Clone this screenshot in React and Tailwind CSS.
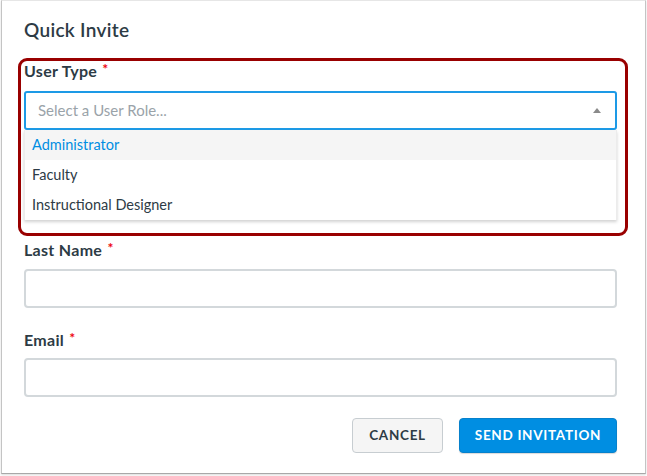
export default function App() {
  const font = { fontFamily: 'Lato, "Open Sans", sans-serif' };
  const Star = () => (
    <span className="text-[#ee0612] text-[14px] font-bold align-top relative top-[-2px] ml-[1px]">*</span>
  );
  return (
    <div className="w-[647px] h-[476px] bg-white overflow-hidden" style={font}>
      <div className="ml-[1px] w-[645px] h-[474px] bg-white border-x border-b border-t border-t-[#e6e6e6] border-x-[#c4c4c4] border-b-[#a8a8a8] shadow-[0_1px_2px_rgba(0,0,0,0.15)] pl-[22px] pr-[28px] pt-[17px]">
        <div className="text-[19px] leading-[24px] font-semibold tracking-[0.3px] text-[#2d3b45]">Quick Invite</div>

        <div className="mt-[16px] -ml-[6px] -mr-[11px] border-[3px] border-[#990000] rounded-[9px] pl-[3px] pr-[8px] pb-[13px]">
          <div className="text-[16px] leading-[20px] font-bold tracking-[0.3px] text-[#2d3b45]">
            User Type <Star />
          </div>
          <div className="mt-[10px] h-[39px] border-2 border-[#1d9ae6] rounded-[3px] flex items-center pl-3 pr-[14px]">
            <span className="flex-1 text-[15px] text-[#9aa3a9]">Select a User Role...</span>
            <svg width="8" height="5" viewBox="0 0 8 5" className="block">
              <path d="M4 0 L8 5 L0 5 Z" fill="#8a8a8a" />
            </svg>
          </div>
          <div className="bg-white shadow-[0_2px_3px_rgba(0,0,0,0.18)] border-x border-x-[#ececec]">
            <div className="h-[30px] flex items-center pl-[7px] bg-[#f5f5f5] text-[14.5px] text-[#008ee2]">Administrator</div>
            <div className="h-[30px] flex items-center pl-[7px] text-[14.5px] text-[#2d3b45]">Faculty</div>
            <div className="h-[30px] flex items-center pl-[7px] text-[14.5px] text-[#2d3b45]">Instructional Designer</div>
          </div>
        </div>

        <div className="mt-[4px] text-[16px] leading-[20px] font-bold tracking-[0.3px] text-[#2d3b45]">
          Last Name <Star />
        </div>
        <div className="mt-[9px] h-[39px] border-2 border-[#d3d8db] rounded-[4px] bg-white"></div>

        <div className="mt-[22px] text-[16px] leading-[20px] font-bold tracking-[0.3px] text-[#2d3b45]">
          Email <Star />
        </div>
        <div className="mt-[8px] h-[39px] border-2 border-[#d3d8db] rounded-[4px] bg-white"></div>

        <div className="mt-[21px] flex justify-end gap-[16px]">
          <button className="w-[91px] h-[35px] rounded-[4px] bg-[#f5f5f5] border border-[#c7cdd1] text-[13.5px] font-bold tracking-[0.7px] text-[#2d3b45]">CANCEL</button>
          <button className="w-[158px] h-[35px] rounded-[4px] bg-[#008ee2] border border-[#0681cc] text-[13.5px] font-bold tracking-[0.7px] text-white shadow-[0_1px_1px_rgba(0,0,0,0.15)]">SEND INVITATION</button>
        </div>
      </div>
    </div>
  );
}
